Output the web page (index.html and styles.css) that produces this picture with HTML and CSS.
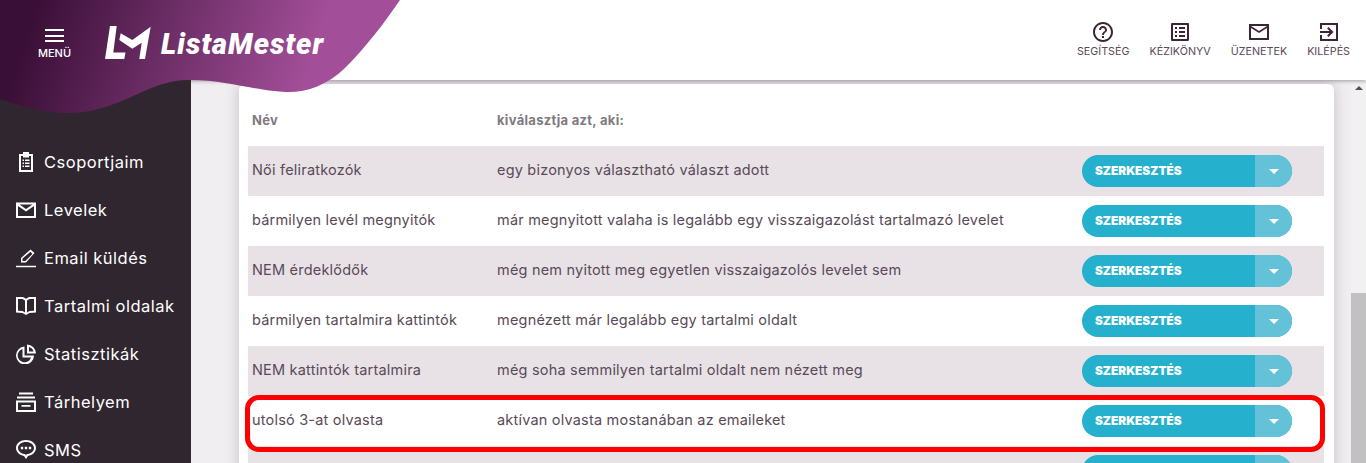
FILE: index.html
```html
<!DOCTYPE html>
<html>
<head>
  <meta charset="utf-8" />
  <title>ListaMester</title>
  <meta name="viewport" content="width=device-width,initial-scale=1.0" />
  <link rel="stylesheet" href="styles.css">
</head>
<body>
<div class="app">
  <div class="header">
    <div class="topnav">
      <div class="topItem">
        <svg viewBox="0 0 24 24"><path d="M11 18h2v-2h-2v2zm1-16C6.48 2 2 6.48 2 12s4.48 10 10 10 10-4.48 10-10S17.52 2 12 2zm0 18c-4.41 0-8-3.59-8-8s3.59-8 8-8 8 3.59 8 8-3.59 8-8 8zm0-14c-2.21 0-4 1.79-4 4h2c0-1.1.9-2 2-2s2 .9 2 2c0 2-3 1.75-3 5h2c0-2.25 3-2.5 3-5 0-2.21-1.79-4-4-4z"/></svg>
        <span>Segítség</span>
      </div>
      <div class="topItem">
        <svg viewBox="0 0 24 24"><path d="M19 5v14H5V5h14m1.1-2H3.900c-.5 0-.9.4-.9.9v16.200c0 .4.4.9.9.9h16.200c.4 0 .9-.5.9-.9V3.900c0-.5-.5-.9-.9-.9zM11 7h6v2h-6V7zm0 4h6v2h-6v-2zm0 4h6v2h-6zM7 7h2v2H7zm0 4h2v2H7zm0 4h2v2H7z"/></svg>
        <span>Kézikönyv</span>
      </div>
      <div class="topItem">
        <svg viewBox="0 0 24 24"><path d="M22 4H2v16h20V4zm-2 14H4V8l8 5 8-5v10zm-8-7L4 6h16l-8 5z"/></svg>
        <span>Üzenetek</span>
      </div>
      <div class="topItem">
        <svg viewBox="0 0 24 24"><path d="M10.090 15.590L11.500 17l5-5-5-5-1.410 1.410L12.670 11H3v2h9.670l-2.580 2.590zM21 3H3v6h2V5h14v14H5v-4H3v6h18V3z"/></svg>
        <span>Kilépés</span>
      </div>
    </div>
  </div>

  <div class="body">
    <div class="sidebar">
      <div class="menuItem">
        <svg viewBox="0 0 20 20"><path d="M7 0h6v2h4v18H3V2h4zM5 4v14h10V4h-2v1.500H7V4zM6.500 7.500h1.500V9H6.500zM9 7.500h4.500V9H9zM6.500 10.500h1.500V12H6.500zM9 10.500h4.500V12H9zM6.500 13.500h1.500V15H6.500zM9 13.500h4.500V15H9z" fill-rule="evenodd"/></svg>
        Csoportjaim
      </div>
      <div class="menuItem">
        <svg viewBox="0 0 20 20"><path d="M0 2.500h20v15.500H0zM2 6v10h16V6l-8 5.500zM3.500 4.500L10 9l6.500-4.500z" fill-rule="evenodd"/></svg>
        Levelek
      </div>
      <div class="menuItem">
        <svg viewBox="0 0 20 20"><path d="M0 17.800h20V19.300H0zM14.500 1.500L18.500 5 10 14.500H5V10zM14.500 3.700L6.500 10.600V13h2.900l7-7z" fill-rule="evenodd"/></svg>
        Email küldés
      </div>
      <div class="menuItem">
        <svg viewBox="0 0 20 20"><path d="M0 1h7l3 1.800L13 1h7v15.500l-6.500.5-3.500 2-3.500-2L0 16.500zM2 3v11.700l4.500.4 2.500 1.400V4.500L6.500 3zM11 4.500v12l2.500-1.400 4.500-.4V3h-4.500z" fill-rule="evenodd"/></svg>
        Tartalmi oldalak
      </div>
      <div class="menuItem">
        <svg viewBox="0 0 20 20"><path d="M8.500 2.500V11.500H18A9 9 0 1 1 8.500 2.500zM6.500 5A6.800 6.800 0 1 0 15 13.500H6.500zM11 .5a9 9 0 0 1 9 9h-9zM13 3v4.500h4.500A6.500 6.500 0 0 0 13 3z" fill-rule="evenodd"/></svg>
        Statisztikák
      </div>
      <div class="menuItem">
        <svg viewBox="0 0 20 20"><path d="M3 .5h14v2H3zM1 4.500h18v2H1zM0 8.500h20V20H0zM2 10.500V18h16v-7.500zM5.500 13h9v1.700h-9z" fill-rule="evenodd"/></svg>
        Tárhelyem
      </div>
      <div class="menuItem">
        <svg viewBox="0 0 20 20"><path d="M10 0c5.500 0 10 3.500 10 8 0 4-3.500 7.300-8 7.900L10 19l-2-3.100C3.500 15.300 0 12 0 8 0 3.500 4.500 0 10 0zM10 2c-4.500 0-8 2.700-8 6s3.300 6 7.200 6.100L10 15.500l.8-1.400C14.700 14 18 11.300 18 8s-3.500-6-8-6zM4.800 6.800h2.400v2.400H4.800zM8.800 6.800h2.400v2.400H8.800zM12.800 6.800h2.400v2.400h-2.400z" fill-rule="evenodd"/></svg>
        SMS
      </div>
    </div>

    <div class="content">
      <div class="card">
        <div class="row head">
          <div class="nameCol">Név</div>
          <div class="descCol">kiválasztja azt, aki:</div>
        </div>
        <div class="row shaded">
          <div class="nameCol">Női feliratkozók</div>
          <div class="descCol">egy bizonyos választható választ adott</div>
          <div class="editBtn"><span class="editLabel">Szerkesztés</span><span class="editArrow"></span></div>
        </div>
        <div class="row">
          <div class="nameCol">bármilyen levél megnyitók</div>
          <div class="descCol">már megnyitott valaha is legalább egy visszaigazolást tartalmazó levelet</div>
          <div class="editBtn"><span class="editLabel">Szerkesztés</span><span class="editArrow"></span></div>
        </div>
        <div class="row shaded">
          <div class="nameCol">NEM érdeklődők</div>
          <div class="descCol">még nem nyitott meg egyetlen visszaigazolós levelet sem</div>
          <div class="editBtn"><span class="editLabel">Szerkesztés</span><span class="editArrow"></span></div>
        </div>
        <div class="row">
          <div class="nameCol">bármilyen tartalmira kattintók</div>
          <div class="descCol">megnézett már legalább egy tartalmi oldalt</div>
          <div class="editBtn"><span class="editLabel">Szerkesztés</span><span class="editArrow"></span></div>
        </div>
        <div class="row shaded">
          <div class="nameCol">NEM kattintók tartalmira</div>
          <div class="descCol">még soha semmilyen tartalmi oldalt nem nézett meg</div>
          <div class="editBtn"><span class="editLabel">Szerkesztés</span><span class="editArrow"></span></div>
        </div>
        <div class="row">
          <div class="nameCol">utolsó 3-at olvasta</div>
          <div class="descCol">aktívan olvasta mostanában az emaileket</div>
          <div class="editBtn"><span class="editLabel">Szerkesztés</span><span class="editArrow"></span></div>
        </div>
        <div class="row shaded">
          <div class="nameCol"></div>
          <div class="descCol"></div>
          <div class="editBtn"><span class="editLabel"></span><span class="editArrow"></span></div>
        </div>
      </div>
    </div>

    <div class="scrollbar">
      <div class="scrollUp"></div>
      <div class="scrollThumb"></div>
    </div>
  </div>

  <!-- wave with the logo lies over header and sidebar -->
  <svg class="wave" viewBox="0 0 400 115">
    <defs>
      <linearGradient id="waveGrad" gradientUnits="userSpaceOnUse" x1="35" y1="10" x2="300" y2="95">
        <stop offset="0" stop-color="#3a0f37"/>
        <stop offset="1" stop-color="#a24e98"/>
      </linearGradient>
    </defs>
    <path fill="url(#waveGrad)" d="M0 0H400C385 22 367 46 345 68C326 86 305 93 285 92C250 90 225 79 185 80C150 82 130 103 90 111C60 117 25 108 0 99Z"/>
  </svg>
  <div class="brand">
    <div class="menuBtn">
      <div class="burger"><i></i><i></i><i></i></div>
      <span>Menü</span>
    </div>
    <svg class="logoMark" viewBox="0 0 46 34">
      <path fill="#fff" d="M5 0h6.700L8.300 26.500H20.500L19.300 33H0z"/>
      <path fill="#fff" d="M15.700 7.300L27.300 14 45.700.7 40 33H34.300L36.700 16.700 27.300 22.700 14.300 14z"/>
    </svg>
    <div class="logoText">ListaMester</div>
  </div>

  <div class="highlight"></div>
</div>
</body>
</html>
```

FILE: styles.css
```css
* {
  box-sizing: border-box;
}

html, body {
  margin: 0;
  height: 100%;
  overflow: hidden;
}

body {
  font-family: "Inter", "Liberation Sans", sans-serif;
  color: #5a4a58;
}

.app {
  position: relative;
  height: 100vh;
  display: flex;
  flex-direction: column;
  overflow: hidden;
}

.header {
  height: 80px;
  flex: none;
  background: #fff;
  display: flex;
  justify-content: flex-end;
  box-shadow: 0 1px 4px rgba(60,50,60,0.45);
  position: relative;
  z-index: 2;
}

.topnav {
  display: flex;
  gap: 20px;
  padding: 20px 16px 0 0;
}

.topItem {
  display: flex;
  flex-direction: column;
  align-items: center;
  font-size: 10.75px;
  line-height: 14px;
  text-transform: uppercase;
  color: #5a4a58;
}

.topItem svg {
  width: 24px;
  height: 24px;
  fill: #3b2437;
  margin-bottom: 1px;
}

.body {
  flex: 1;
  display: flex;
  min-height: 0;
}

.sidebar {
  width: 191px;
  flex: none;
  background: #30262f;
  padding: 58px 0 0 16px;
  color: #fff;
  font-size: 16.5px;
  letter-spacing: 0.5px;
}

.menuItem {
  height: 48px;
  display: flex;
  align-items: center;
  gap: 8px;
  white-space: nowrap;
}

.menuItem svg {
  width: 20px;
  height: 20px;
  fill: #fff;
  flex: none;
}

.content {
  flex: 1;
  background: #f1eef1;
  padding: 4px 17px 0 48px;
  overflow: hidden;
}

.card {
  background: #fff;
  border-radius: 6px 6px 0 0;
  padding: 0 10px 0 9px;
  height: 500px;
  box-shadow: 0 0 14px rgba(60,50,60,0.25);
}

.row {
  height: 50px;
  display: flex;
  align-items: center;
  font-size: 14.5px;
  letter-spacing: 0.2px;
  color: #5a4a58;
}

.row.head {
  height: 62px;
  padding-top: 10px;
  font-size: 13px;
  letter-spacing: 0.3px;
  font-weight: 700;
  color: #807a80;
}

.row.shaded {
  background: #e8e2e7;
}

.nameCol {
  width: 245px;
  padding: 0 0 3px 4px;
  flex: none;
}

.descCol {
  flex: 1;
  padding: 0 0 3px 4px;
}

.row.head .nameCol,
.row.head .descCol {
  padding-bottom: 0;
}

.editBtn {
  width: 210px;
  height: 32px;
  flex: none;
  margin-right: 32px;
  border-radius: 16px;
  overflow: hidden;
  display: flex;
  background: #25b1cd;
  letter-spacing: 0;
}

.editLabel {
  flex: 1;
  padding-left: 13px;
  line-height: 32px;
  font-size: 11.8px;
  font-weight: 900;
  color: #fff;
  text-transform: uppercase;
}

.editArrow {
  width: 37px;
  background: #63c2d7;
  display: flex;
  align-items: center;
  justify-content: center;
}

.editArrow::after {
  content: "";
  border-left: 5px solid transparent;
  border-right: 5px solid transparent;
  border-top: 5px solid #fff;
}

.scrollbar {
  width: 15px;
  flex: none;
  background: #f1f1f1;
  position: relative;
}

.scrollUp {
  width: 0;
  margin: 6px auto 0;
  border-left: 4px solid transparent;
  border-right: 4px solid transparent;
  border-bottom: 4px solid #505050;
}

.scrollThumb {
  position: absolute;
  left: 0;
  right: 0;
  top: 213px;
  bottom: 0;
  background: #c1c1c1;
}

.wave {
  position: absolute;
  left: 0;
  top: 0;
  width: 400px;
  height: 115px;
  z-index: 3;
}

.brand {
  position: absolute;
  left: 38px;
  top: 26px;
  z-index: 4;
  display: flex;
  align-items: flex-start;
  color: #fff;
}

.menuBtn {
  width: 33px;
  display: flex;
  flex-direction: column;
  align-items: center;
  font-size: 11px;
  font-weight: 500;
  line-height: 14px;
  text-transform: uppercase;
}

.burger {
  width: 19px;
  height: 13px;
  margin: 3px 0 4px;
  display: flex;
  flex-direction: column;
  justify-content: space-between;
}

.burger i {
  display: block;
  height: 2px;
  background: #fff;
}

.logoMark {
  width: 46px;
  height: 34px;
  margin-left: 34px;
}

.logoText {
  margin: 1px 0 0 10px;
  font-family: "Roboto", sans-serif;
  font-weight: 900;
  font-style: italic;
  font-size: 29px;
  letter-spacing: 1px;
  line-height: 34px;
  white-space: nowrap;
}

.highlight {
  position: absolute;
  left: 245px;
  top: 395px;
  width: 1080px;
  height: 57px;
  border: 5px solid #f00;
  border-radius: 14px;
  z-index: 1;
}
```
